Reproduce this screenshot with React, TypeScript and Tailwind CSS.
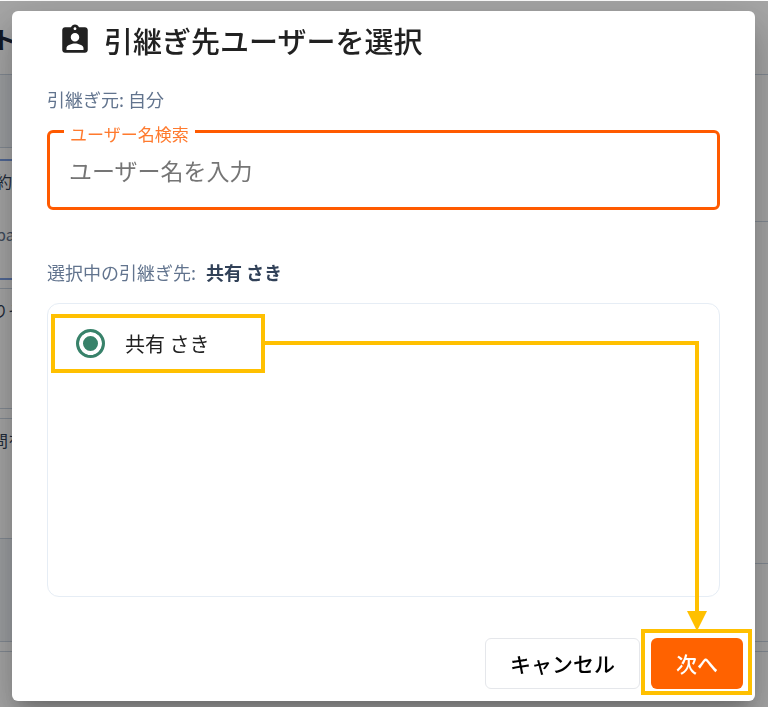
import React, { useState } from 'react';
import { MdAssignmentInd } from 'react-icons/md';

const users = [{ id: 'saki', name: '共有 さき' }];

const PageBehind: React.FC = () => (
  <div className="flex min-h-screen justify-between overflow-hidden bg-white text-slate-700">
    <div className="w-3 overflow-hidden whitespace-nowrap">
      <div className="flex h-[74px] items-center pt-1">
        <span className="-ml-2 text-2xl font-bold text-slate-800">ト</span>
      </div>
      <div className="h-[74px] border-y border-slate-300 bg-slate-100" />
      <div className="mt-[11px] h-[121px] border-y-2 border-[#7c9fe6] pt-2">
        <p className="-ml-1 text-base leading-6">約</p>
        <p className="-ml-1 mt-[29px] text-base leading-6 text-slate-500">pa</p>
      </div>
      <div className="mt-2 h-[121px] border-y border-slate-300 pt-[9px]">
        <p className="-ml-2 text-base leading-6">りそ</p>
      </div>
      <div className="mt-[9px] h-[121px] border-y border-slate-300 pt-[9px]">
        <p className="-ml-2 text-base leading-6">問を</p>
      </div>
      <div className="h-[103px] border-b border-slate-300 bg-slate-100" />
      <div className="mt-[9px] border-t border-slate-300" />
    </div>
    <div className="w-[13px]">
      <div className="h-[75px] border-b border-slate-300" />
      <div className="h-[147px] border-b border-slate-300" />
      <div className="h-[342px] border-b border-slate-300" />
      <div className="h-[78px] border-b border-slate-300" />
      <div className="h-[10px] border-b border-slate-300" />
    </div>
  </div>
);

const App: React.FC = () => {
  const [query, setQuery] = useState('');
  const [selected, setSelected] = useState('saki');
  const selectedUser = users.find((user) => user.id === selected);

  return (
    <div className="font-['Noto_Sans_CJK_JP',sans-serif]" lang="ja">
      <PageBehind />
      <div className="fixed inset-0 mt-px flex flex-col bg-black/35 pt-2.5 pr-[13px] pb-1.5 pl-3">
        <div
          role="dialog"
          aria-modal="true"
          aria-labelledby="dialog-title"
          className="relative flex flex-1 flex-col rounded-md bg-white shadow-[0_11px_15px_-7px_rgba(0,0,0,0.2),0_24px_38px_3px_rgba(0,0,0,0.14),0_9px_46px_8px_rgba(0,0,0,0.12)]"
        >
          <header className="flex items-center gap-3 px-[46px] pt-[9px]">
            <MdAssignmentInd className="size-[34px] text-[#212121]" />
            <h1 id="dialog-title" className="text-[29px] leading-10 font-medium text-[#212121]">
              引継ぎ先ユーザーを選択
            </h1>
          </header>

          <div className="flex flex-1 flex-col px-[35px] pt-[27px]">
            <p className="text-lg leading-6 text-slate-500">引継ぎ元: 自分</p>

            <fieldset className="mt-[7px] rounded-md border-[3px] border-[#ff5a00] px-3.5 pb-[21px]">
              <legend className="px-1.5 pt-1.5 text-[17px] leading-5 text-[#ff7a2e]">
                <label htmlFor="user-search">ユーザー名検索</label>
              </legend>
              <input
                id="user-search"
                type="text"
                value={query}
                onChange={(e) => setQuery(e.target.value)}
                placeholder="ユーザー名を入力"
                className="mt-2.5 block h-8 w-full px-[5px] text-[23px] text-gray-800 outline-none placeholder:text-[#757575]"
              />
            </fieldset>

            <p className="mt-[50px] text-lg leading-6 text-slate-500">
              選択中の引継ぎ先:
              <span className="ml-2.5 font-bold text-slate-700">{selectedUser?.name}</span>
            </p>

            <div className="mt-[19px] flex-1 rounded-xl border border-[#e6edf5] px-[3px] py-2.5">
              {users.map((user) => (
                <label
                  key={user.id}
                  className="flex h-[59px] w-[214px] items-center gap-5 border-4 border-[#ffc000] pl-[21px] text-xl text-[#212121]"
                >
                  <input
                    type="radio"
                    name="user"
                    value={user.id}
                    checked={selected === user.id}
                    onChange={() => setSelected(user.id)}
                    className="size-[29px] appearance-none rounded-full border-[3px] border-[#38826a] checked:bg-[#38826a] checked:shadow-[inset_0_0_0_4px_white]"
                  />
                  {user.name}
                </label>
              ))}
            </div>
          </div>

          <footer className="flex items-start justify-end gap-px pt-8 pr-[3px] pb-1.5">
            <button
              type="button"
              className="mt-[9px] h-[51px] rounded-md border border-gray-200 px-6 text-[21px] font-medium text-black"
            >
              キャンセル
            </button>
            <div className="border-4 border-[#ffc000] pt-[5px] pr-[5px] pb-0.5 pl-1.5">
              <button
                type="button"
                className="block h-[51px] rounded-md bg-[#ff6200] px-[25px] text-[21px] font-medium text-white"
              >
                次へ
              </button>
            </div>
          </footer>

          {/* connector from the selected user to the next button */}
          <div className="pointer-events-none absolute top-[330px] right-14 bottom-[89px] left-[253px] border-t-4 border-r-4 border-[#ffc000]">
            <svg viewBox="0 0 20 20" className="absolute -right-3 -bottom-[19px] size-5" fill="#ffc000">
              <path d="M0 0h20L10 20z" />
            </svg>
          </div>
        </div>
      </div>
    </div>
  );
};

export default App;
